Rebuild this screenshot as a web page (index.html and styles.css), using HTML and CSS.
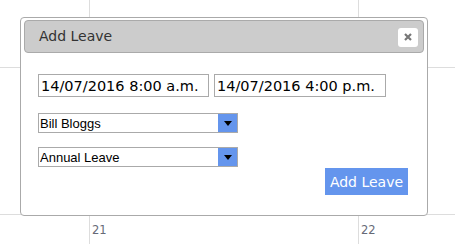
FILE: index.html
```html
<!DOCTYPE html>
<html>
<head>
<meta charset="utf-8">
<link rel="stylesheet" href="styles.css">
</head>
<body>
<div class="viewport">
  <div class="calendar">
    <div class="cell"></div><div class="cell"></div><div class="cell"></div>
    <div class="cell"></div><div class="cell"></div><div class="cell"></div>
    <div class="cell"></div>
    <div class="cell"><span class="day">21</span></div>
    <div class="cell"><span class="day">22</span></div>
  </div>

  <div class="dialog">
    <div class="titlebar">
      <span class="title">Add Leave</span>
      <button class="close" type="button" aria-label="Close">
        <svg width="8" height="8" viewBox="0 0 8 8"><path d="M1 1L7 7M7 1L1 7" stroke="#777" stroke-width="2.2" stroke-linecap="butt"/></svg>
      </button>
    </div>
    <div class="content">
      <div class="dates">
        <input class="field" type="text" value="14/07/2016 8:00 a.m.">
        <input class="field" type="text" value="14/07/2016 4:00 p.m.">
      </div>
      <div class="selectbox">
        <select class="select"><option>Bill Bloggs</option></select>
        <span class="arrow"><svg width="8" height="5" viewBox="0 0 8 5"><path d="M0 0H8L4 5Z" fill="#000"/></svg></span>
      </div>
      <div class="selectbox second">
        <select class="select"><option>Annual Leave</option></select>
        <span class="arrow"><svg width="8" height="5" viewBox="0 0 8 5"><path d="M0 0H8L4 5Z" fill="#000"/></svg></span>
      </div>
      <div class="actions">
        <button class="submit" type="button">Add Leave</button>
      </div>
    </div>
  </div>
</div>
</body>
</html>
```

FILE: styles.css
```css
html, body {
  margin: 0;
  padding: 0;
  background: #fff;
}
.viewport {
  position: relative;
  width: 455px;
  height: 244px;
  overflow: hidden;
  font-family: "DejaVu Sans", Verdana, sans-serif;
}
.calendar {
  display: grid;
  grid-template-columns: repeat(3, 269px);
  grid-auto-rows: 147px;
  margin-left: -180px;
  margin-top: -80px;
}
.cell {
  box-sizing: border-box;
  border-left: 1px solid #ddd;
  border-top: 1px solid #ddd;
  padding: 4px 0 0 2px;
}
.day {
  font-family: "DejaVu Sans", sans-serif;
  font-size: 11.5px;
  color: #666a77;
}
.dialog {
  position: absolute;
  left: 20px;
  top: 17px;
  width: 408px;
  height: 199px;
  box-sizing: border-box;
  border: 1px solid #aaa;
  border-radius: 4px;
  background: #fff;
  padding: 2px 3px;
}
.titlebar {
  box-sizing: border-box;
  height: 33px;
  border: 1px solid #aaa;
  border-radius: 4px;
  background: #ccc;
  display: flex;
  align-items: center;
  justify-content: space-between;
  padding: 0 5px 0 14px;
}
.title {
  font-size: 14px;
  color: #333;
  margin-top: -1px;
}
.close {
  width: 20px;
  height: 19px;
  border: 0;
  border-radius: 3px;
  background: #fff;
  padding: 0;
  display: flex;
  align-items: center;
  justify-content: center;
  margin-top: 1px;
}
.content {
  padding: 21px 0 0 14px;
  display: flex;
  flex-direction: column;
  align-items: flex-start;
}
.dates {
  display: flex;
  gap: 5px;
}
.field {
  box-sizing: border-box;
  height: 23px;
  border: 1px solid #aaa;
  padding: 0 2px;
  margin: 0;
  font-family: "DejaVu Sans", Verdana, sans-serif;
  font-size: 14.5px;
  color: #000;
  outline: none;
}
.field:first-child { width: 171px; }
.field:last-child { width: 172px; }
.selectbox {
  box-sizing: border-box;
  width: 200px;
  height: 20px;
  border: 1px solid #aaa;
  display: flex;
  margin-top: 16px;
}
.selectbox.second {
  margin-top: 14px;
}
.select {
  flex: 1;
  appearance: none;
  -webkit-appearance: none;
  border: 0;
  background: #fff;
  padding: 0 0 0 1px;
  margin: 0;
  font-family: "Liberation Sans", Arial, sans-serif;
  font-size: 13px;
  color: #000;
  outline: none;
}
.arrow {
  width: 19px;
  background: #6495ed;
  display: flex;
  align-items: center;
  justify-content: center;
}
.actions {
  align-self: stretch;
  display: flex;
  justify-content: flex-end;
  padding-right: 16px;
  margin-top: 1px;
}
.submit {
  width: 83px;
  height: 27px;
  border: 0;
  background: #6495ed;
  color: #fff;
  font-family: "DejaVu Sans", Verdana, sans-serif;
  font-size: 14px;
  padding: 0;
}
```
